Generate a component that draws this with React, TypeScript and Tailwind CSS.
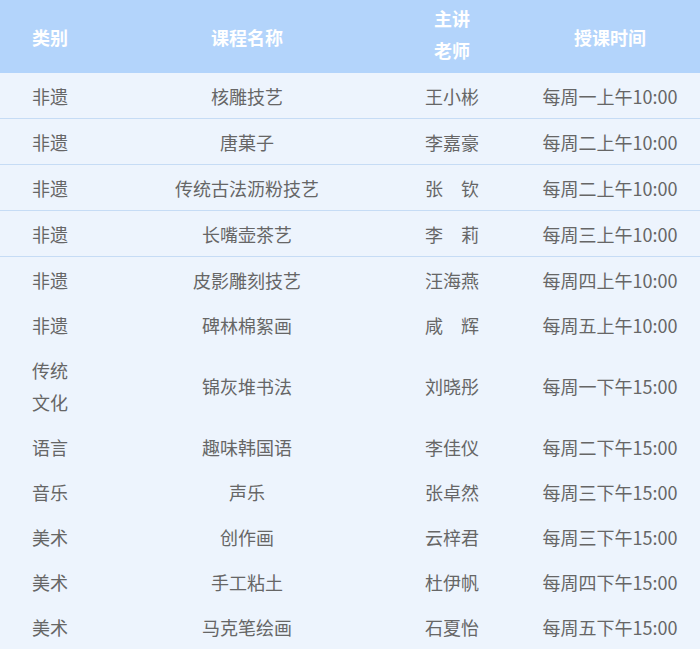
import React from 'react';

type Course = { type: string; name: string; teacher: string; time: string; line?: boolean };

const COURSES: Course[] = [
  { type: '非遗', name: '核雕技艺', teacher: '王小彬', time: '每周一上午10:00', line: true },
  { type: '非遗', name: '唐菓子', teacher: '李嘉豪', time: '每周二上午10:00', line: true },
  { type: '非遗', name: '传统古法沥粉技艺', teacher: '张　钦', time: '每周二上午10:00', line: true },
  { type: '非遗', name: '长嘴壶茶艺', teacher: '李　莉', time: '每周三上午10:00', line: true },
  { type: '非遗', name: '皮影雕刻技艺', teacher: '汪海燕', time: '每周四上午10:00' },
  { type: '非遗', name: '碑林棉絮画', teacher: '咸　辉', time: '每周五上午10:00' },
  { type: '传统\n文化', name: '锦灰堆书法', teacher: '刘晓彤', time: '每周一下午15:00' },
  { type: '语言', name: '趣味韩国语', teacher: '李佳仪', time: '每周二下午15:00' },
  { type: '音乐', name: '声乐', teacher: '张卓然', time: '每周三下午15:00' },
  { type: '美术', name: '创作画', teacher: '云梓君', time: '每周三下午15:00' },
  { type: '美术', name: '手工粘土', teacher: '杜伊帆', time: '每周四下午15:00' },
  { type: '美术', name: '马克笔绘画', teacher: '石夏怡', time: '每周五下午15:00' },
];

export default function App() {
  return (
    <div
      className="w-[700px] h-[649px] overflow-hidden bg-[#edf4fd] text-[18px] leading-[32px] text-[#666]"
      style={{ fontFamily: '"Noto Sans CJK SC", "Noto Sans", sans-serif' }}
    >
      <table className="w-full table-fixed border-collapse">
        <colgroup>
          <col className="w-[110px]" />
          <col className="w-[274px]" />
          <col className="w-[136px]" />
          <col className="w-[180px]" />
        </colgroup>
        <thead>
          <tr className="h-[73px] bg-[#b3d4fb] font-bold text-white">
            <th className="pl-[32px] text-left font-bold">类别</th>
            <th className="text-center font-bold">课程名称</th>
            <th className="pt-[1px] pb-[6px] text-center font-bold">
              主讲
              <br />
              老师
            </th>
            <th className="text-center font-bold">授课时间</th>
          </tr>
        </thead>
        <tbody>
          {COURSES.map((c, i) => (
            <tr key={i} className={c.line ? 'border-b border-[#c6dcf5]' : ''}>
              <td className="py-[6.5px] pl-[32px] whitespace-pre-line">{c.type}</td>
              <td className="py-[6.5px] text-center">{c.name}</td>
              <td className="py-[6.5px] text-center whitespace-pre">{c.teacher}</td>
              <td className="py-[6.5px] text-center">{c.time}</td>
            </tr>
          ))}
        </tbody>
      </table>
    </div>
  );
}
